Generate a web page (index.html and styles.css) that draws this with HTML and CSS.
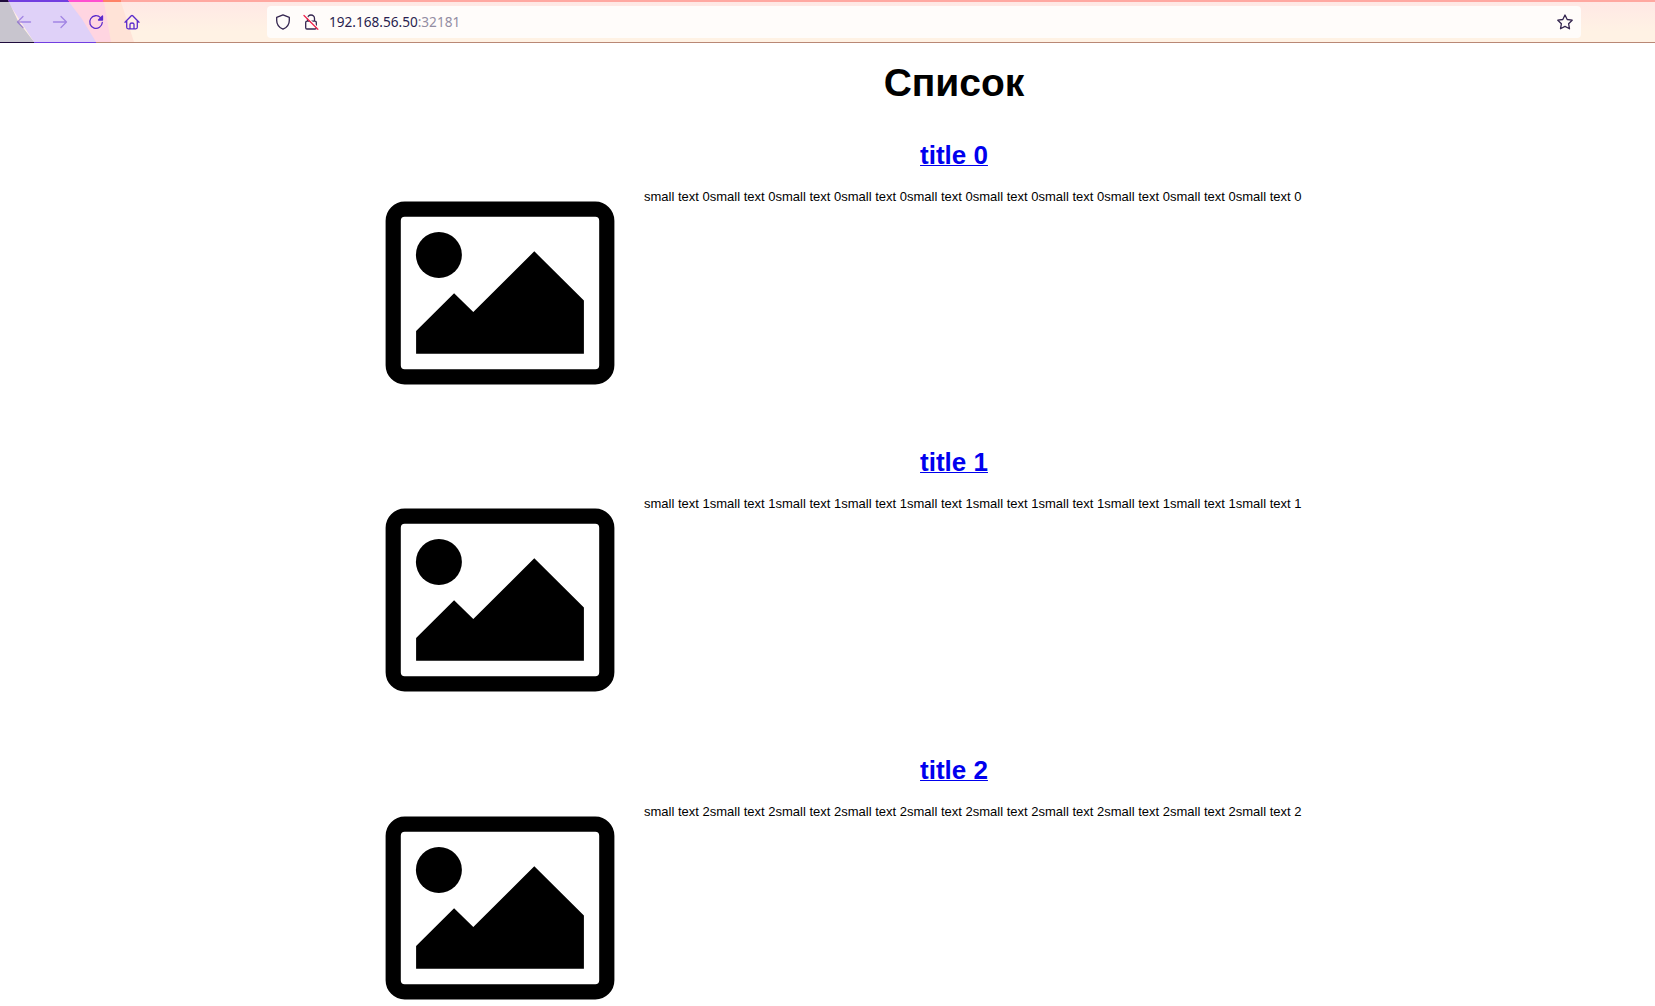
FILE: index.html
```html
<!DOCTYPE html>
<html lang="ru">
<head>
<meta charset="utf-8">
<title>Список</title>
<link rel="stylesheet" href="styles.css">
</head>
<body>
<svg class="defs" aria-hidden="true">
  <symbol id="picture" viewBox="-0.500 -0.500 230 184">
    <rect x="7.7" y="7.7" width="213.6" height="167.6" rx="11.5" fill="none" stroke="#000" stroke-width="15.2"/>
    <circle cx="53.4" cy="53.4" r="23"/>
    <path d="M30.6 152.3V129.6L68.6 91.8L87.8 110.6L148.8 49.8L198.4 99V152.3Z"/>
  </symbol>
</svg>
<header class="toolbar">
  <svg class="theme" width="160" height="43" aria-hidden="true">
    <path fill="#ffe3d7" d="M100 2H121L134 42H105Z"/>
    <path fill="#ffd5e1" d="M65 2H104L111 42H90Z"/>
    <path fill="#dfd1f8" d="M8 2H69L82 19L96 42H34Z"/>
    <path fill="#c8c5ce" d="M0 2H9L18 21L34 42H0Z"/>
    <path fill="#1f0b3c" d="M0 0H8L9 2H0ZM0 42H34V43H0Z"/>
    <path fill="#713ee0" d="M8 0H68L69.500 2H9ZM34 42H96V43H34Z"/>
    <path fill="#ff4fd0" d="M68 0H103V2H69.500Z"/>
    <path fill="#ff8367" d="M103 0H121V2H103Z"/>
  </svg>
  <nav class="buttons">
    <svg class="icon dim" viewBox="0 0 16 16"><path d="M14.500 8H1.500M7 2.500L1.500 8L7 13.500"/></svg>
    <svg class="icon dim" viewBox="0 0 16 16"><path d="M1.500 8H14.500M9 2.500L14.500 8L9 13.500"/></svg>
    <svg class="icon" viewBox="0 0 16 16"><path d="M12.500 3.600A6.300 6.300 0 1 0 14.300 8.500"/><path class="solid" d="M14.500 2V6H10.500Z"/></svg>
    <svg class="icon" viewBox="0 0 16 16"><path d="M1 8.300L7.300 1.800Q8 1.200 8.700 1.800L15 8.300M2.700 7V13.300Q2.700 14.800 4.200 14.800H11.800Q13.300 14.800 13.300 13.300V7M6 14.500V10.300Q6 9 8 9T10 10.300V14.500"/></svg>
  </nav>
  <div class="address">
    <svg class="icon shield" viewBox="0 0 16 16"><path d="M8 .9L14.300 3.300V6.500Q14.300 12.500 8 15.200Q1.700 12.500 1.700 6.500V3.300Z"/></svg>
    <svg class="icon lock" viewBox="0 0 16 16"><path d="M4.500 7V4.500A3.500 3.500 0 0 1 11.500 4.500V7M4 7.200H12Q13.300 7.200 13.300 8.500V13.700Q13.300 15 12 15H4Q2.700 15 2.700 13.700V8.500Q2.700 7.200 4 7.200Z"/><path class="gap" d="M2 1L15.500 14.500"/><path class="strike" d="M1 1.500L14.800 15.300"/></svg>
    <span class="url">192.168.56.50<span class="port">:32181</span></span>
    <svg class="icon star" viewBox="0 0 16 16"><path d="M8 1L10.200 5.500L15.200 6.200L11.600 9.700L12.500 14.800L8 12.400L3.500 14.800L4.400 9.700L.8 6.200L5.800 5.500Z"/></svg>
  </div>
</header>
<main class="page">
  <h1 class="heading">Список</h1>
  <section class="item">
    <svg class="picture"><use href="#picture"/></svg>
    <div class="content">
      <h2 class="title"><a href="#">title 0</a></h2>
      <p class="text">small text 0small text 0small text 0small text 0small text 0small text 0small text 0small text 0small text 0small text 0</p>
    </div>
  </section>
  <section class="item">
    <svg class="picture"><use href="#picture"/></svg>
    <div class="content">
      <h2 class="title"><a href="#">title 1</a></h2>
      <p class="text">small text 1small text 1small text 1small text 1small text 1small text 1small text 1small text 1small text 1small text 1</p>
    </div>
  </section>
  <section class="item">
    <svg class="picture"><use href="#picture"/></svg>
    <div class="content">
      <h2 class="title"><a href="#">title 2</a></h2>
      <p class="text">small text 2small text 2small text 2small text 2small text 2small text 2small text 2small text 2small text 2small text 2</p>
    </div>
  </section>
</main>
</body>
</html>
```
FILE: styles.css
```css
* { box-sizing: border-box; }
body {
  margin: 0;
  height: 1006px;
  overflow: hidden;
  background: #fff;
  color: #000;
  font: 13px/15px "Liberation Sans", Arial, sans-serif;
}
.defs { display: none; }
.toolbar {
  position: relative;
  display: flex;
  align-items: center;
  height: 43px;
  padding: 0 74px 0 16px;
  border-top: 2px solid #ffa8a1;
  border-bottom: 1px solid #b98875;
  background: linear-gradient(#ffe8e5, #fff2e4 75%);
}
.theme { position: absolute; left: 0; top: -2px; }
.buttons { position: relative; display: flex; gap: 20px; width: 251px; }
.icon {
  flex: none;
  width: 16px;
  height: 16px;
  fill: none;
  stroke: #5b2bcc;
  stroke-width: 1.3;
  stroke-linecap: round;
  stroke-linejoin: round;
}
.dim { opacity: .45; }
.solid { fill: #5b2bcc; }
.address {
  display: flex;
  flex: 1;
  align-items: center;
  height: 32px;
  padding: 0 8px;
  border-radius: 4px;
  background: #fffcfa;
}
.address .icon { stroke: #34254f; }
.lock { margin-left: 12px; }
.address .gap { stroke: #fffcfa; }
.address .strike { stroke: #f0264f; }
.url {
  flex: 1;
  margin-left: 10px;
  color: #291d4f;
  font: 13.600px/20px "Noto Sans", sans-serif;
}
.port { color: #938da3; }
.page { padding-left: 385px; }
.heading {
  width: 1138px;
  margin: 17px 0 0;
  font-size: 39px;
  line-height: 45px;
  text-align: center;
}
.item { display: flex; height: 307.450px; }
.picture { flex: none; width: 230px; height: 184px; margin: 96px 0 0; }
.content { width: 620px; margin-left: 29px; }
.title { margin: 35px 0 0; font-size: 26px; line-height: 30px; text-align: center; }
.title a { color: #00e; text-decoration-thickness: 1px; text-underline-offset: 1px; }
.text { margin: 19px 0 0; white-space: nowrap; }
```
